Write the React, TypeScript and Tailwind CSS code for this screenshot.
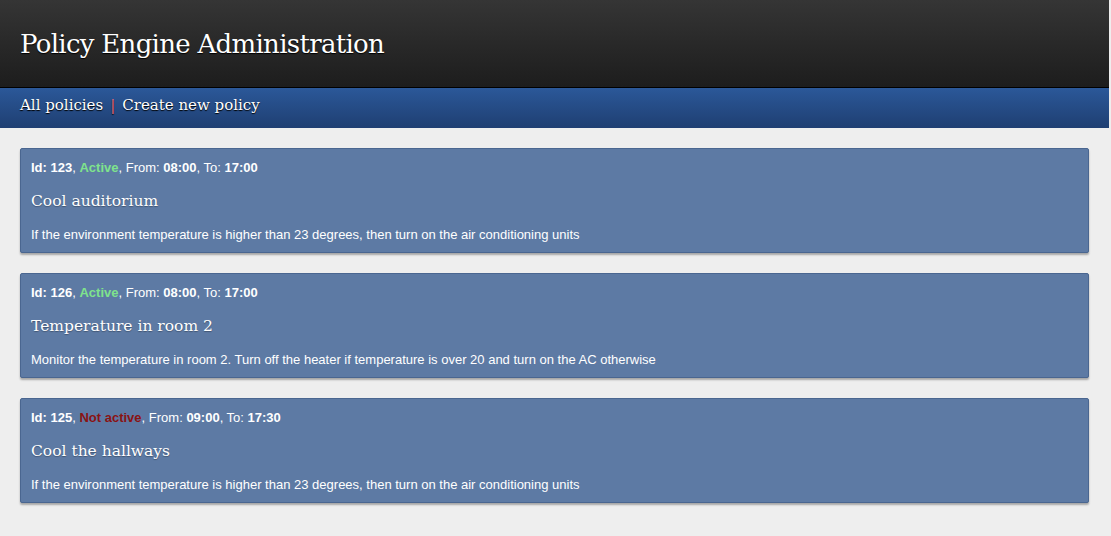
const policies = [
  {
    id: 123,
    active: true,
    from: '08:00',
    to: '17:00',
    name: 'Cool auditorium',
    description: 'If the environment temperature is higher than 23 degrees, then turn on the air conditioning units',
  },
  {
    id: 126,
    active: true,
    from: '08:00',
    to: '17:00',
    name: 'Temperature in room 2',
    description: 'Monitor the temperature in room 2. Turn off the heater if temperature is over 20 and turn on the AC otherwise',
  },
  {
    id: 125,
    active: false,
    from: '09:00',
    to: '17:30',
    name: 'Cool the hallways',
    description: 'If the environment temperature is higher than 23 degrees, then turn on the air conditioning units',
  },
];

const serif = { fontFamily: '"DejaVu Serif", "Liberation Serif", serif' };
const sans = { fontFamily: '"Liberation Sans", Arial, sans-serif' };

export default function App() {
  return (
    <div className="min-h-[536px] bg-[#eeeeee] pr-[2px]">
      <header className="h-[88px] border-b border-black bg-gradient-to-b from-[#353535] to-[#1d1d1d] px-5 pt-[26px]">
        <h1
          className="text-[26px] leading-[36px] tracking-[-0.7px] text-white [text-shadow:0_1px_1px_#000]"
          style={serif}
        >
          Policy Engine Administration
        </h1>
      </header>

      <nav
        className="flex h-[40px] items-center gap-[7px] bg-gradient-to-b from-[#2b5899] to-[#1f3f72] px-5 pb-[5px] text-[15px] text-white [text-shadow:0_1px_1px_#000]"
        style={serif}
      >
        <a href="#">All policies</a>
        <span className="text-[#e66a78]">|</span>
        <a href="#">Create new policy</a>
      </nav>

      <main className="flex flex-col gap-5 px-5 pt-5 pb-8">
        {policies.map((policy) => (
          <div
            key={policy.id}
            className="h-[105px] rounded-[2px] border border-[#4a6690] bg-[#5d7aa4] px-[10px] pt-[11px] text-white shadow-[0_2px_2px_rgba(0,0,0,0.3)]"
          >
            <div className="text-[13px] leading-[16px]" style={sans}>
              <b>Id: {policy.id}</b>,{' '}
              <b className={policy.active ? 'text-[#7fe38c]' : 'text-[#8a1313]'}>
                {policy.active ? 'Active' : 'Not active'}
              </b>
              , From: <b>{policy.from}</b>, To: <b>{policy.to}</b>
            </div>
            <h2
              className="mt-[14px] text-[15.5px] leading-[22px] [text-shadow:0_1px_1px_rgba(0,0,0,0.3)]"
              style={serif}
            >
              {policy.name}
            </h2>
            <p className="mt-[15px] text-[13px] leading-[16px]" style={sans}>
              {policy.description}
            </p>
          </div>
        ))}
      </main>
    </div>
  );
}
